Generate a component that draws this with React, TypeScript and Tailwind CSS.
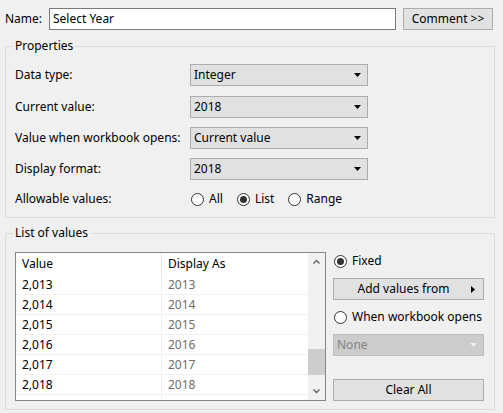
import React from "react";

const DownArrow = ({ color = "#000" }: { color?: string }) => (
  <svg width="7" height="4" viewBox="0 0 7 4" className="shrink-0">
    <polygon points="0,0 7,0 3.5,4" fill={color} />
  </svg>
);

const Dropdown = ({ value }: { value: string }) => (
  <div className="flex items-center justify-between w-[178px] h-[22px] bg-[#e1e1e1] border border-[#adadad] pl-[3px] pr-[6px]">
    <span className="leading-[16px]">{value}</span>
    <DownArrow />
  </div>
);

const Radio = ({ checked, label }: { checked?: boolean; label: string }) => (
  <div className="flex items-center">
    <div className="w-[13px] h-[13px] rounded-full border border-[#333333] bg-white flex items-center justify-center">
      {checked && <div className="w-[7px] h-[7px] rounded-full bg-[#333333]" />}
    </div>
    <span className="ml-[5px] leading-[16px]">{label}</span>
  </div>
);

const Row = ({ label, children, className = "" }: { label: string; children: React.ReactNode; className?: string }) => (
  <div className={`flex items-center h-[22px] ${className}`}>
    <div className="w-[175px] leading-[16px]">{label}</div>
    {children}
  </div>
);

const rows = [
  ["2,013", "2013"],
  ["2,014", "2014"],
  ["2,015", "2015"],
  ["2,016", "2016"],
  ["2,017", "2017"],
  ["2,018", "2018"],
  ["", ""],
];

export default function App() {
  return (
    <div className="w-[503px] h-[413px] bg-[#f0f0f0] text-[12px] text-black overflow-hidden font-['Segoe_UI','Noto_Sans',sans-serif]">
      {/* Name row */}
      <div className="flex items-center pl-[5px] pt-[8px]">
        <span className="w-[44px] leading-[16px]">Name:</span>
        <div className="w-[347px] h-[22px] bg-white border border-[#7a7a7a] flex items-center pl-[3px]">
          <span className="leading-[16px]">Select Year</span>
        </div>
        <div className="ml-[7px] w-[90px] h-[22px] bg-[#e1e1e1] border border-[#adadad] flex items-center justify-center">
          <span className="leading-[16px]">Comment &gt;&gt;</span>
        </div>
      </div>

      {/* Properties */}
      <fieldset className="mt-[8px] ml-[5px] w-[490px] border border-[#dcdcdc] pb-[7px]">
        <legend className="ml-[7px] px-[2px] leading-[16px] h-[16px]">Properties</legend>
        <div className="pl-[9px]">
          <Row label="Data type:" className="mt-[10px]">
            <Dropdown value="Integer" />
          </Row>
          <Row label="Current value:" className="mt-[10px]">
            <Dropdown value="2018" />
          </Row>
          <Row label="Value when workbook opens:" className="mt-[9px]">
            <Dropdown value="Current value" />
          </Row>
          <Row label="Display format:" className="mt-[9px]">
            <Dropdown value="2018" />
          </Row>
          <Row label="Allowable values:" className="mt-[8px]">
            <div className="flex items-center gap-[14px] pl-[1px]">
              <Radio label="All" />
              <Radio checked label="List" />
              <Radio label="Range" />
            </div>
          </Row>
        </div>
      </fieldset>

      {/* List of values */}
      <fieldset className="mt-[7px] ml-[5px] w-[490px] border border-[#dcdcdc] pb-[8px]">
        <legend className="ml-[7px] px-[2px] leading-[16px] h-[16px]">List of values</legend>
        <div className="flex mt-[11px] pl-[9px]">
          <div className="flex w-[311px] h-[149px] border border-[#828790] bg-white overflow-hidden">
            <div className="flex-1 flex flex-col overflow-hidden">
              <div className="flex h-[22px] shrink-0 items-center">
                <div className="w-[146px] h-full flex items-center pl-[6px] border-r border-[#e5e5e5]">Value</div>
                <div className="flex-1 h-full flex items-center pl-[6px]">Display As</div>
              </div>
              {rows.map(([v, d], i) => (
                <div key={i} className="flex h-[20px] shrink-0 border-b border-[#f0f0f0]">
                  <div className="w-[146px] h-full flex items-center pl-[6px] border-r border-[#f0f0f0]">{v}</div>
                  <div className="flex-1 h-full flex items-center pl-[6px] text-[#6d6d6d]">{d}</div>
                </div>
              ))}
            </div>
            <div className="w-[17px] h-full bg-[#f0f0f0] flex flex-col items-center">
              <div className="h-[17px] w-full flex items-center justify-center">
                <svg width="7" height="5" viewBox="0 0 7 5">
                  <polyline points="0.5,4.5 3.5,1.5 6.5,4.5" fill="none" stroke="#606060" strokeWidth="1.3" />
                </svg>
              </div>
              <div className="flex-1 w-full flex flex-col">
                <div className="h-[79px]" />
                <div className="h-[26px] w-full bg-[#cdcdcd]" />
              </div>
              <div className="h-[17px] w-full flex items-center justify-center">
                <svg width="7" height="5" viewBox="0 0 7 5">
                  <polyline points="0.5,0.5 3.5,3.5 6.5,0.5" fill="none" stroke="#606060" strokeWidth="1.3" />
                </svg>
              </div>
            </div>
          </div>

          <div className="ml-[7px] w-[151px] flex flex-col">
            <div className="h-[18px] flex items-center pl-[1px]">
              <Radio checked label="Fixed" />
            </div>
            <div className="mt-[8px] h-[22px] bg-[#e1e1e1] border border-[#adadad] flex items-center pr-[8px]">
              <span className="flex-1 text-center leading-[16px] pl-[2px]">Add values from</span>
              <svg width="4" height="7" viewBox="0 0 4 7">
                <polygon points="0,0 4,3.5 0,7" fill="#000" />
              </svg>
            </div>
            <div className="mt-[8px] h-[18px] flex items-center pl-[1px]">
              <Radio label="When workbook opens" />
            </div>
            <div className="mt-[8px] h-[22px] bg-[#cccccc] border border-[#bfbfbf] flex items-center justify-between pl-[3px] pr-[6px]">
              <span className="leading-[16px] text-[#838383]">None</span>
              <DownArrow color="#f0f0f0" />
            </div>
            <div className="mt-auto h-[22px] bg-[#e1e1e1] border border-[#adadad] flex items-center justify-center">
              <span className="leading-[16px]">Clear All</span>
            </div>
          </div>
        </div>
      </fieldset>
    </div>
  );
}
